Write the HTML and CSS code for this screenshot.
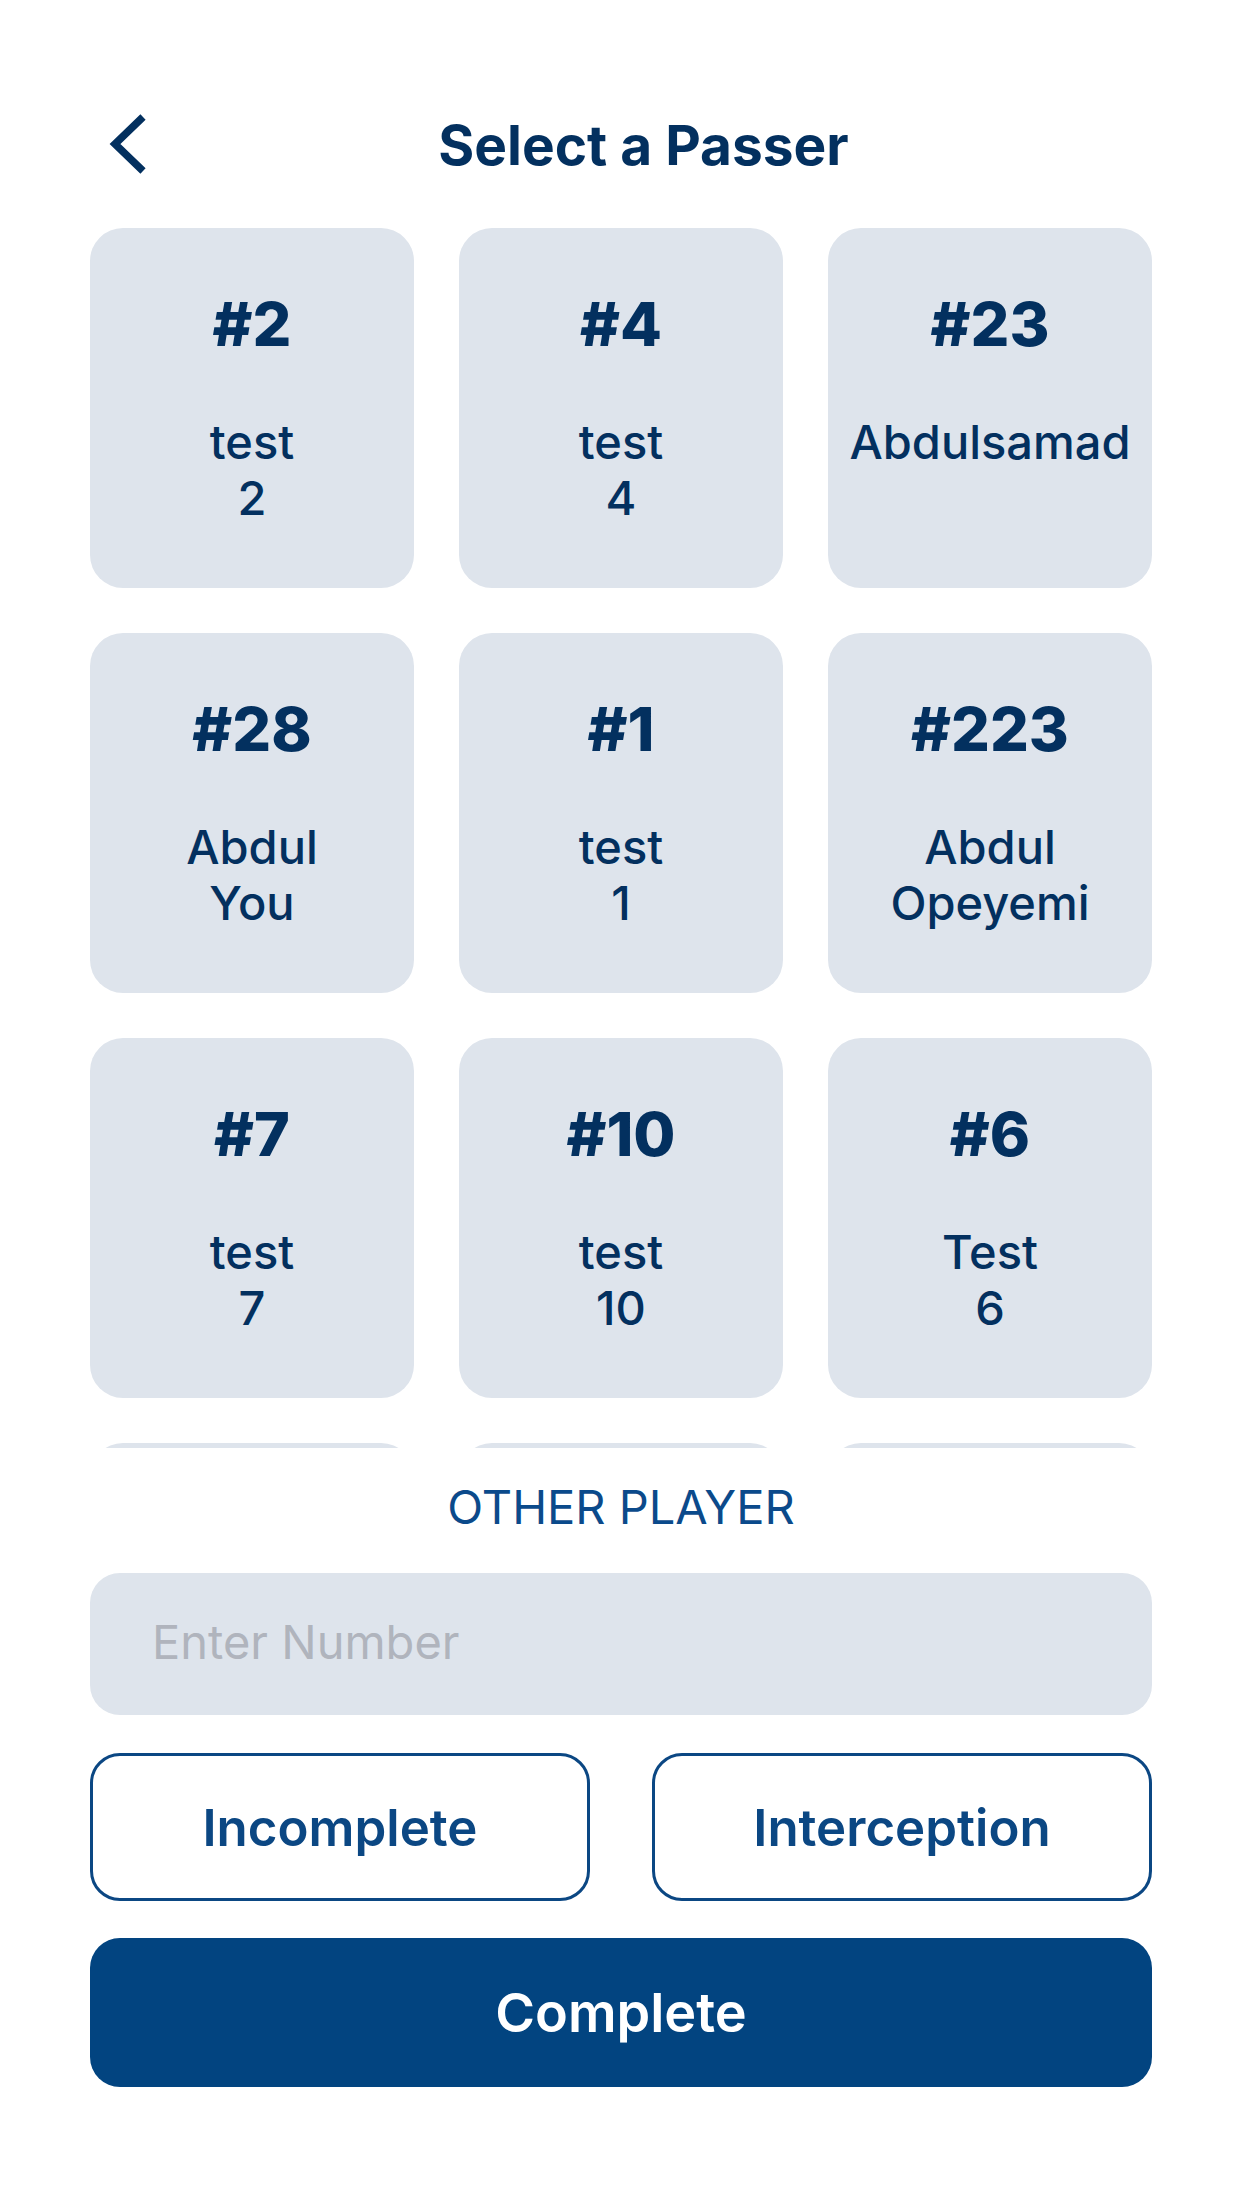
FILE: index.html
```html
<!DOCTYPE html>
<html lang="en">
<head>
<meta charset="utf-8">
<title>Select a Passer</title>
<link rel="stylesheet" href="styles.css">
</head>
<body>
<div class="screen">
  <header class="header">
    <div class="back">
      <svg width="45" height="66" viewBox="0 0 45 66" aria-hidden="true">
        <polyline points="38,5 10,32 38,59" fill="none" stroke="#03305f" stroke-width="7.5" stroke-linecap="butt" stroke-linejoin="miter"/>
      </svg>
    </div>
    <h1 class="title">Select a Passer</h1>
  </header>

  <div class="grid">
    <div class="card"><div class="num">#2</div><div class="name">test<br>2</div></div>
    <div class="card"><div class="num">#4</div><div class="name">test<br>4</div></div>
    <div class="card"><div class="num">#23</div><div class="name">Abdulsamad</div></div>
    <div class="card"><div class="num">#28</div><div class="name">Abdul<br>You</div></div>
    <div class="card"><div class="num">#1</div><div class="name">test<br>1</div></div>
    <div class="card"><div class="num">#223</div><div class="name">Abdul<br>Opeyemi</div></div>
    <div class="card"><div class="num">#7</div><div class="name">test<br>7</div></div>
    <div class="card"><div class="num">#10</div><div class="name">test<br>10</div></div>
    <div class="card"><div class="num">#6</div><div class="name">Test<br>6</div></div>
    <div class="card"></div>
    <div class="card"></div>
    <div class="card"></div>
  </div>

  <div class="other">OTHER PLAYER</div>
  <input class="number-input" type="text" placeholder="Enter Number">

  <div class="actions">
    <div class="btn btn-outline">Incomplete</div>
    <div class="btn btn-outline">Interception</div>
  </div>
  <div class="btn btn-primary">Complete</div>
</div>
</body>
</html>
```

FILE: styles.css
```css
* { box-sizing: border-box; }

html, body {
  margin: 0;
  padding: 0;
  background: #ffffff;
}

body {
  font-family: Inter, "Noto Sans", "Liberation Sans", sans-serif;
  color: #03305f;
}

.screen {
  width: 1242px;
  height: 2208px;
  display: flex;
  flex-direction: column;
  overflow: hidden;
}

.header {
  display: flex;
  align-items: center;
  height: 66px;
  margin-top: 112px;
  padding: 0 105px;
}

.back {
  width: 45px;
  height: 66px;
  display: flex;
}

.title {
  flex: 1;
  margin: 0;
  text-align: center;
  font-size: 55px;
  line-height: 66px;
  font-weight: 700;
  color: #03305f;
}

.grid {
  margin-top: 50px;
  height: 1220px;
  overflow: hidden;
  padding: 0 90px;
  display: grid;
  grid-template-columns: repeat(3, 1fr);
  grid-auto-rows: 360px;
  gap: 45px;
}

.card {
  background: #dee4ec;
  border-radius: 33px;
  padding-top: 60px;
  display: flex;
  flex-direction: column;
  align-items: center;
  text-align: center;
}

.num {
  font-size: 61px;
  line-height: 72px;
  font-weight: 800;
  color: #03305f;
}

.name {
  margin-top: 54px;
  font-size: 47px;
  line-height: 56px;
  font-weight: 500;
  color: #03305f;
}

.other {
  margin-top: 30px;
  text-align: center;
  font-size: 47px;
  line-height: 58px;
  font-weight: 400;
  color: #0b4a8b;
}

.number-input {
  margin: 37px 90px 0;
  height: 142px;
  border: none;
  outline: none;
  border-radius: 30px;
  background: #dee4ec;
  padding: 0 62px 6px;
  font-family: Inter, "Noto Sans", "Liberation Sans", sans-serif;
  font-size: 47px;
  color: #03305f;
}

.number-input::placeholder {
  color: #b0b4bd;
}

.actions {
  margin: 38px 90px 0;
  display: grid;
  grid-template-columns: 1fr 1fr;
  gap: 62px;
}

.btn {
  height: 148px;
  border-radius: 30px;
  display: flex;
  align-items: center;
  justify-content: center;
  font-size: 51px;
  font-weight: 600;
}

.btn-outline {
  border: 3px solid #0b4783;
  color: #0b4783;
  background: #ffffff;
}

.btn-primary {
  margin: 37px 90px 0;
  height: 149px;
  background: #024480;
  color: #ffffff;
  font-size: 54px;
}
```
